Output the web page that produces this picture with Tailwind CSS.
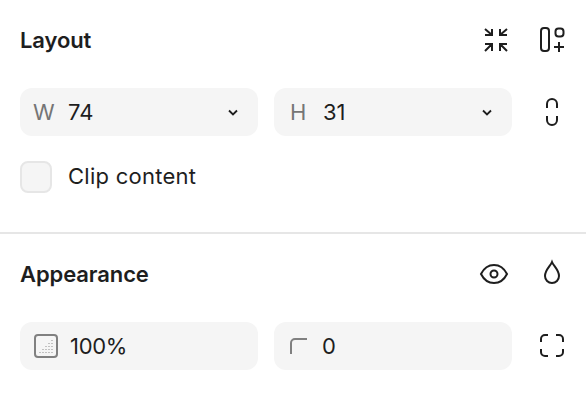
<!DOCTYPE html>
<html lang="en">
<head>
    <meta charset="UTF-8">
    <title>Layout panel</title>
    <script src="https://cdn.jsdelivr.net/npm/@tailwindcss/browser@4"></script>
</head>
<body class="bg-white font-['Inter',sans-serif] text-[#1e1e1e] w-[586px] h-[402px] overflow-hidden">
    <section class="h-[234px] border-b-2 border-[#e6e6e6] px-5">
        <div class="h-[80px] flex items-center justify-between">
            <h2 class="text-[22px] font-semibold tracking-[-0.1px]">Layout</h2>
            <div class="flex items-center gap-[16px] mr-[-6px]">
                <svg class="w-[40px] h-[40px]" viewBox="0 0 40 40" fill="none" stroke="#1e1e1e" stroke-width="2">
                    <path d="M9 15h7V9M9 9l7 6M31 15h-7V9M31 9l-7 6M9 24h7v7M9 31l7-7M31 24h-7v7M31 31l-7-7" />
                </svg>
                <svg class="w-[40px] h-[40px]" viewBox="0 0 40 40" fill="none" stroke="#1e1e1e" stroke-width="2">
                    <rect x="9" y="8" width="8" height="23" rx="3" />
                    <rect x="23.500" y="8.500" width="8" height="8" rx="3" />
                    <path d="M27 22v10M22 27h10" />
                </svg>
            </div>
        </div>
        <div class="flex items-center gap-4 mt-2">
            <div class="w-[238px] h-[48px] shrink-0 bg-[#f5f5f5] rounded-[12px] flex items-center pl-[13px] pr-[20px] text-[22px]">
                <span class="w-[35px] text-[#757575]">W</span>
                <span class="flex-1">74</span>
                <svg class="w-[10px] h-[7px]" viewBox="0 0 10 7" fill="none" stroke="#1e1e1e" stroke-width="1.800"><path d="M1 1.500l4 4 4-4" /></svg>
            </div>
            <div class="w-[238px] h-[48px] shrink-0 bg-[#f5f5f5] rounded-[12px] flex items-center pl-[16px] pr-[20px] text-[22px]">
                <span class="w-[33px] text-[#757575]">H</span>
                <span class="flex-1">31</span>
                <svg class="w-[10px] h-[7px]" viewBox="0 0 10 7" fill="none" stroke="#1e1e1e" stroke-width="1.800"><path d="M1 1.500l4 4 4-4" /></svg>
            </div>
            <svg class="w-[40px] h-[40px] shrink-0 ml-[4px]" viewBox="0 0 40 40" fill="none" stroke="#1e1e1e" stroke-width="2">
                <path d="M15 16v-4a5 5 0 0 1 10 0v4M15 24v4a5 5 0 0 0 10 0v-4" />
            </svg>
        </div>
        <label class="flex items-center gap-[16px] mt-[24px]">
            <span class="w-[32px] h-[32px] bg-[#f5f5f5] border-2 border-[#e6e6e6] rounded-[8px]"></span>
            <span class="text-[22px] tracking-[0.25px]">Clip content</span>
        </label>
    </section>
    <section class="px-5">
        <div class="h-[80px] flex items-center justify-between">
            <h2 class="text-[22px] font-semibold tracking-[-0.1px]">Appearance</h2>
            <div class="flex items-center gap-[16px] mr-[-6px]">
                <svg class="w-[40px] h-[40px]" viewBox="0 0 40 40" fill="none" stroke="#1e1e1e" stroke-width="2">
                    <path d="M5 20c3-6 8-9 13-9s10 3 13 9c-3 6-8 9-13 9s-10-3-13-9Z" />
                    <circle cx="18" cy="20" r="3.500" />
                </svg>
                <svg class="w-[40px] h-[40px]" viewBox="0 0 40 40" fill="none" stroke="#1e1e1e" stroke-width="2">
                    <path d="M20 8c-1.500 4-7 8-7 14a7 7 0 0 0 14 0c0-6-5.500-10-7-14Z" />
                </svg>
            </div>
        </div>
        <div class="flex items-center gap-4 mt-2">
            <div class="w-[238px] h-[48px] shrink-0 bg-[#f5f5f5] rounded-[12px] flex items-center pl-[14px] text-[22px]">
                <svg class="w-[24px] h-[24px] mr-[12px]" viewBox="0 0 24 24" fill="none">
                    <rect x="1" y="1" width="22" height="22" rx="3" stroke="#808080" stroke-width="2" />
                    <path d="M18 6v1M15 9v1M18 9v1M12 12v1M15 12v1M18 12v1M9 15v1M12 15v1M15 15v1M18 15v1M6 18v1M9 18v1M12 18v1M15 18v1M18 18v1" stroke="#a0a0a0" stroke-width="1.200" />
                </svg>
                <span class="tracking-[-0.3px]">100%</span>
            </div>
            <div class="w-[238px] h-[48px] shrink-0 bg-[#f5f5f5] rounded-[12px] flex items-center pl-[16px] text-[22px]">
                <svg class="w-[17px] h-[16px] mr-[15px]" viewBox="0 0 17 16" fill="none" stroke="#808080" stroke-width="2"><path d="M1 16V5a4 4 0 0 1 4-4h12" /></svg>
                <span>0</span>
            </div>
            <svg class="w-[40px] h-[40px] shrink-0 ml-[4px]" viewBox="0 0 40 40" fill="none" stroke="#1e1e1e" stroke-width="2">
                <path d="M9 16v-3a4 4 0 0 1 4-4h3M24 9h3a4 4 0 0 1 4 4v3M31 23v3a4 4 0 0 1-4 4h-3M16 30h-3a4 4 0 0 1-4-4v-3" />
            </svg>
        </div>
    </section>
</body>
</html>
